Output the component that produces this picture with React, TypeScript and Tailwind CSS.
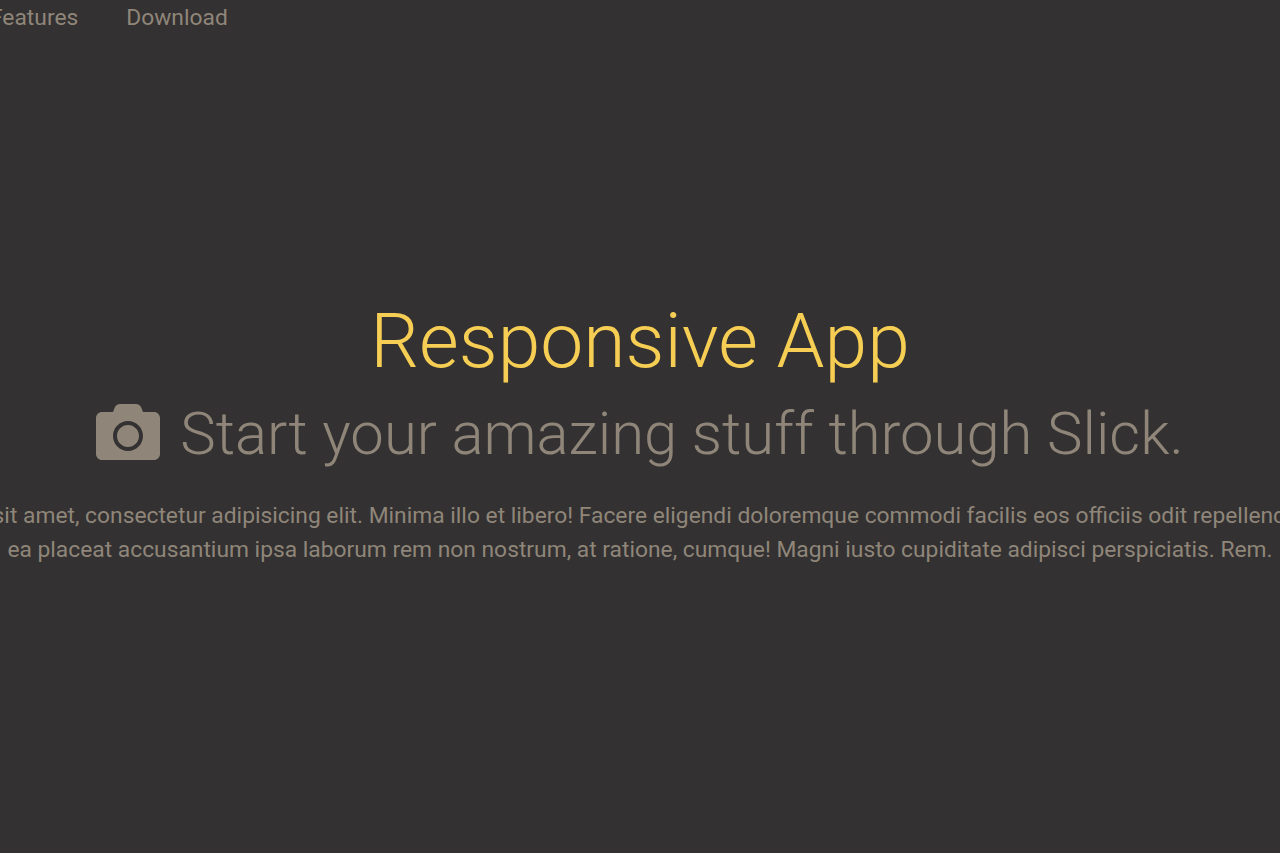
import { FaCamera } from "react-icons/fa";

export default function App() {
  return (
    <div className="h-[853px] w-full overflow-hidden bg-[#333132] font-['Roboto',sans-serif]">
      {/* Nav, pushed past the left edge like the source page */}
      <nav className="flex h-9 items-center gap-12 -ml-[10px] text-[22.8px] text-[#8f8679]">
        <a>Features</a>
        <a>Download</a>
      </nav>

      {/* Hero */}
      <section className="flex flex-col items-center pt-[257px] text-center">
        <h1 className="text-[76.8px] font-light leading-[96px] text-[#f7ce54]">Responsive App</h1>
        <h2 className="mt-[3px] flex items-center gap-5 whitespace-nowrap text-[59.8px] font-light leading-[84px] text-[#8f8679]">
          <FaCamera className="-mt-1 h-[64px] w-[64px]" />
          Start your amazing stuff through Slick.
        </h2>
        <div className="mt-[23px] flex w-full flex-col items-center text-[22.8px] leading-[34px] text-[#8f8679]">
          <p className="whitespace-nowrap">
            Lorem ipsum dolor sit amet, consectetur adipisicing elit. Minima illo et libero! Facere eligendi doloremque commodi facilis eos officiis odit repellendus voluptas quidem
          </p>
          <p className="whitespace-nowrap">
            ea placeat accusantium ipsa laborum rem non nostrum, at ratione, cumque! Magni iusto cupiditate adipisci perspiciatis. Rem.
          </p>
        </div>
      </section>
    </div>
  );
}
